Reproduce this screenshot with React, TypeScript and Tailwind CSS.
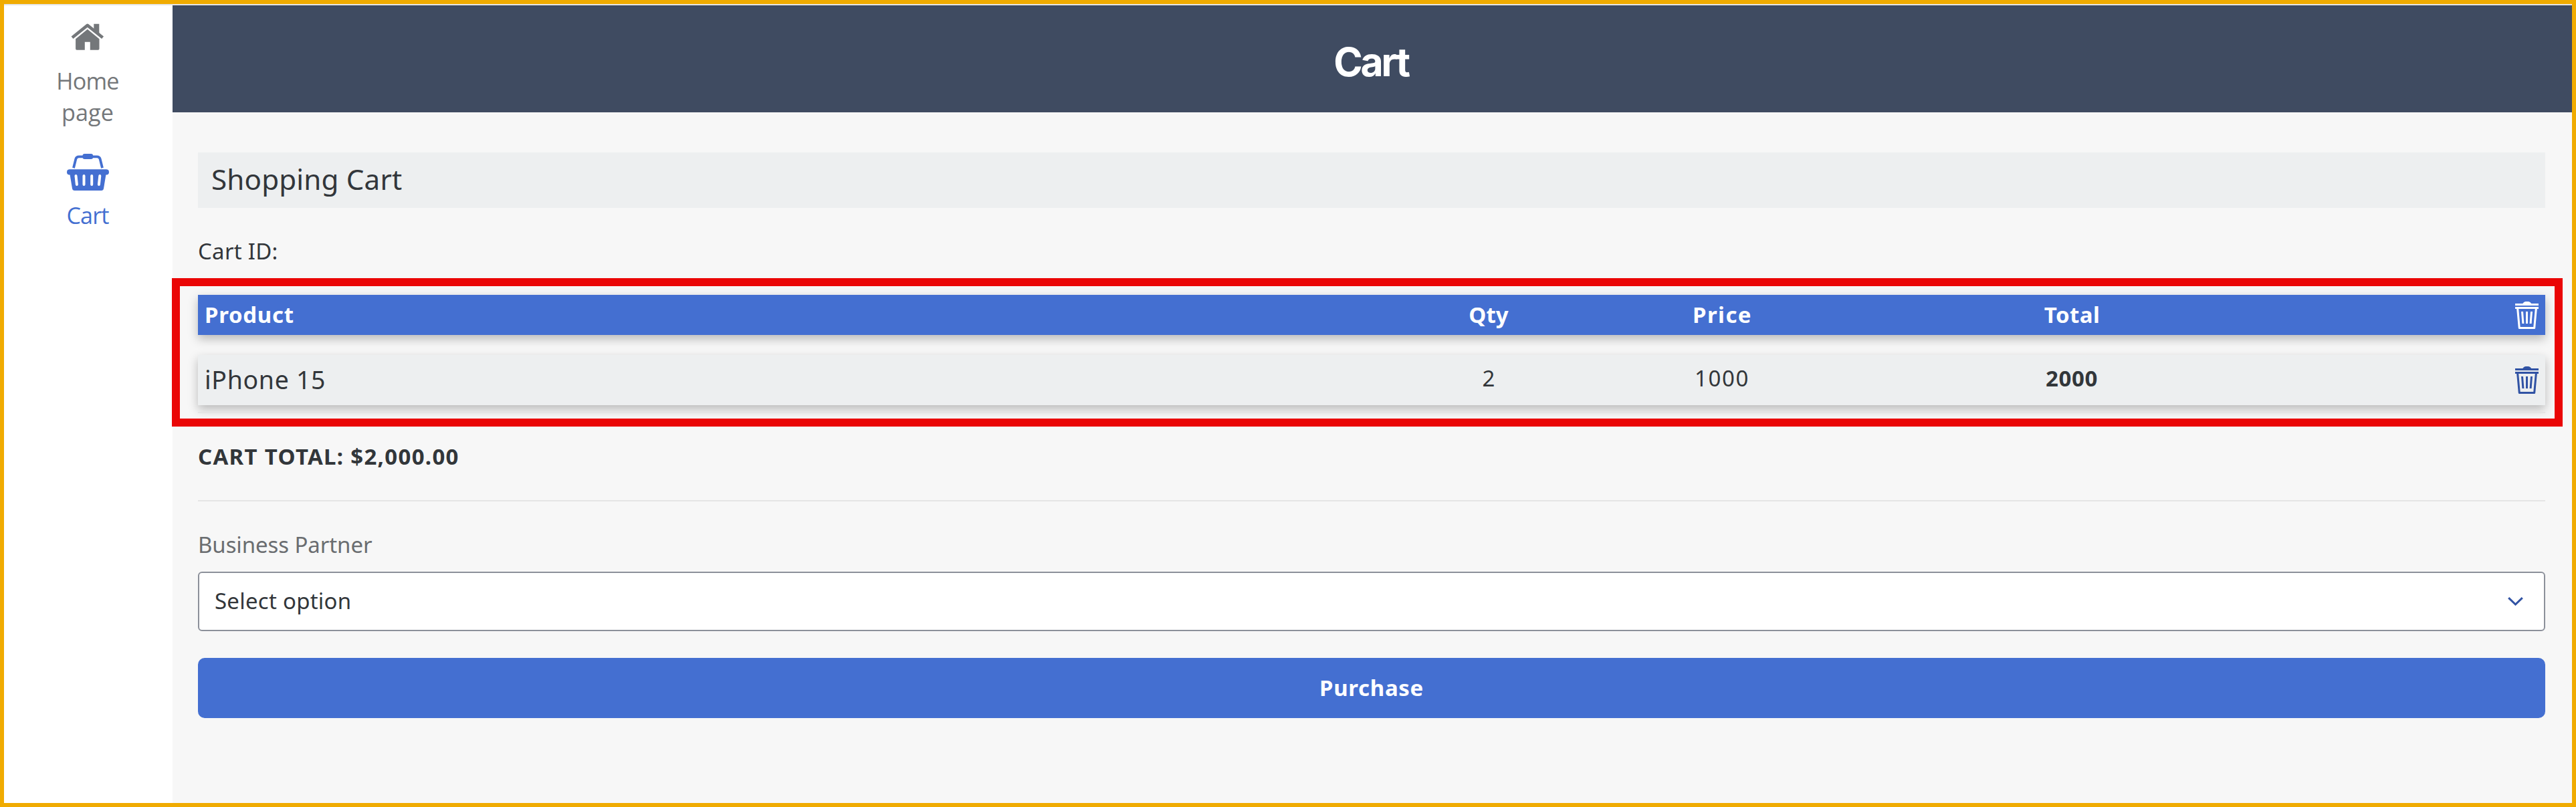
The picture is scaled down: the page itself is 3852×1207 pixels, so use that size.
import React from 'react';

function HomeIcon() {
  return (
    <svg className="h-[40px] w-[50px]" viewBox="0 0 50 40" fill="#74777a">
      <path d="M2 21.3 24.8 2.9 47.6 21.3" fill="none" stroke="#74777a" strokeWidth="4.6" strokeLinejoin="round" />
      <path d="M34.3.7h8v16.6l-8-6.6Z" />
      <path d="M24.8 8.8 42.5 23.2V38a1.7 1.7 0 0 1-1.7 1.7H28.8v-12h-8v12H8.8A1.7 1.7 0 0 1 7.1 38V23.2Z" />
    </svg>
  );
}

function BasketIcon() {
  return (
    <svg className="h-[55px] w-[63px]" viewBox="0 0 63 55" fill="#446fd1">
      <path d="M10 21.2 13.4 7.6Q14.4 4.3 18 4.3H45Q48.6 4.3 49.6 7.6L53 21.2" fill="none" stroke="#446fd1" strokeWidth="3.8" />
      <rect x="23.5" y="0" width="15.6" height="8" rx="3" />
      <rect x="0" y="23.3" width="63" height="8.2" rx="4.1" />
      <path d="M4.2 29H58.8L55 52Q54.5 55 51.5 55H11.5Q8.500 55 8 52Z" />
      <path d="M13.5 33 14.9 46M25.5 33V46M37.2 33V46M49.3 33 47.9 46" fill="none" stroke="#fff" strokeWidth="4" strokeLinecap="round" />
    </svg>
  );
}

function TrashIcon() {
  return (
    <svg className="h-[41px] w-[35px] shrink-0" viewBox="0 0 35 41" fill="currentColor">
      <path d="M11 3.5Q13 0 16 0H19.5Q22.5 0 24.5 3.5Z" />
      <path d="M0 3H35V6H0ZM0 8H35V11H0Z" />
      <path d="M3.6 10 6.3 39.5H28.7L31.4 10" fill="none" stroke="currentColor" strokeWidth="3" strokeLinejoin="round" />
      <path d="M10.5 15 11.9 33M17.5 15V33M24.5 15 23.1 33" fill="none" stroke="currentColor" strokeWidth="3" />
    </svg>
  );
}

const columns = 'grid grid-cols-[1756px_348px_350px_696px_360px] shadow-[0_6px_14px_rgba(0,0,0,0.25)]';

export default function App() {
  return (
    <div className="flex h-[1207px] w-[3852px] flex-col overflow-hidden border-6 border-[#f0ab00] bg-[#f7f7f7] font-['Noto_Sans','Open_Sans',sans-serif] text-[33px] leading-[40px] text-[#32363a]">
      <div className="h-[2px] shrink-0 bg-[#e5e5e5]" />
      <div className="flex min-h-0 flex-1">
        <nav className="flex w-[252px] shrink-0 flex-col items-center bg-white pt-[27px] pr-[2px] text-center font-['Open_Sans',sans-serif] text-[34.2px] leading-[47px] text-[#74777a]">
          <HomeIcon />
          <div className="mt-[22px]">
            <div className="tracking-[-0.78px]">Home</div>
            <div className="tracking-[0.13px]">page</div>
          </div>
          <div className="mt-[39px] flex flex-col items-center text-[#446fd1]">
            <BasketIcon />
            <div className="mt-[13px] tracking-[-0.86px]">Cart</div>
          </div>
        </nav>

        <div className="flex min-w-0 flex-1 flex-col">
          <header className="flex h-[160px] shrink-0 items-center justify-center bg-[#3f4b61] pt-[9px] pr-[4px] font-['Inter',sans-serif] text-[58.9px] font-bold tracking-[-3.2px] text-white">
            Cart
          </header>

          <main className="flex flex-col pt-[60px] pr-[40px] pl-[38px]">
            <h2 className="flex h-[83px] items-center bg-[#edeff0] pb-[4px] pl-[20px] text-[42.2px] tracking-[0.14px]">Shopping Cart</h2>
            <p className="mt-[45px] tracking-[0.26px]">Cart ID:</p>

            <section className="relative mt-[45px]">
              <div className={`${columns} h-[60px] bg-[#446fd1] font-bold text-white`}>
                <div className="self-center pl-[10px] tracking-[0.7px]">Product</div>
                <div className="self-center text-center">Qty</div>
                <div className="self-center pl-[1px] text-center tracking-[1.4px]">Price</div>
                <div className="self-center pl-[1px] text-center tracking-[0.42px]">Total</div>
                <div className="flex justify-end pt-[10px] pr-[10px]"><TrashIcon /></div>
              </div>
              <div className={`${columns} mt-[30px] h-[75px] bg-[#edeff0]`}>
                <div className="self-center pb-[2px] pl-[10px] text-[37.5px] tracking-[0.66px]">iPhone 15</div>
                <div className="self-center pb-[6px] text-center">2</div>
                <div className="self-center pb-[6px] text-center tracking-[1.57px]">1000</div>
                <div className="self-center pb-[6px] text-center font-bold tracking-[0.63px]">2000</div>
                <div className="flex justify-end pt-[17px] pr-[10px] text-[#3153a4]"><TrashIcon /></div>
              </div>
              <div className="mt-[10px] h-[2px] bg-[#e4e4e4]" />
              <div className="pointer-events-none absolute -top-[25px] -right-[26px] h-[222px] w-[3575px] border-12 border-[#ea0606]" />
            </section>

            <p className="mt-[45px] font-bold tracking-[1.3px]">CART TOTAL: $2,000.00</p>
            <div className="mt-[45px] h-[2px] bg-[#e5e5e5]" />
            <label className="mt-[45px] tracking-[-0.1px] text-[#6a6d70]">Business Partner</label>
            <div className="mt-[20px] flex h-[89px] items-center justify-between rounded-[6px] border-2 border-[#8c909a] bg-white pr-[31px] pl-[23px]">
              <span className="pb-[2px] tracking-[0.25px]">Select option</span>
              <svg className="h-[13px] w-[23px]" viewBox="0 0 23 13" fill="none" stroke="#3153a4" strokeWidth="3">
                <path d="M1.2 1.2 11.5 11 21.8 1.2" />
              </svg>
            </div>
            <button className="mt-[40px] h-[90px] rounded-[10px] bg-[#446fd1] pb-[1px] font-bold tracking-[0.67px] text-white">Purchase</button>
          </main>
        </div>
      </div>
    </div>
  );
}
